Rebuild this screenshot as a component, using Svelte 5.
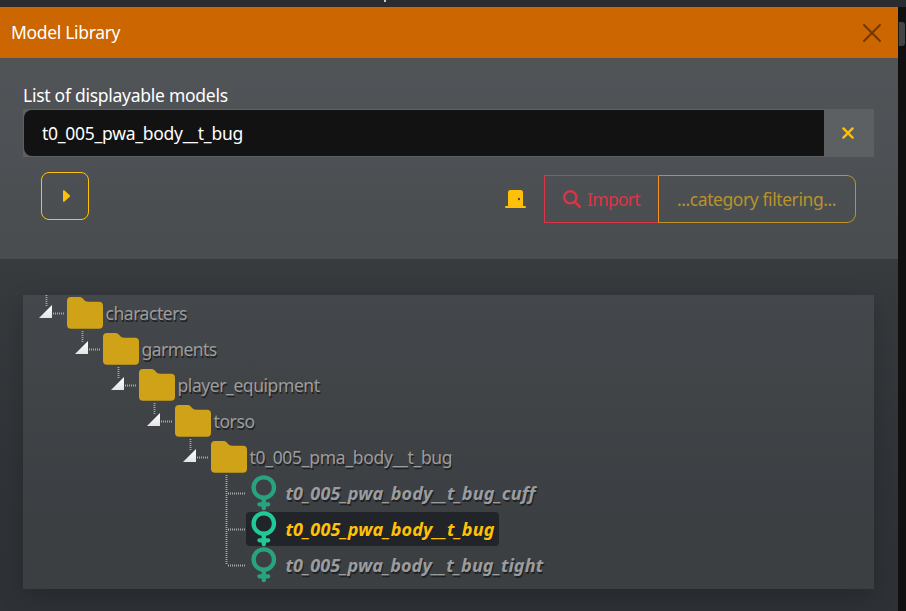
<script>
  const rows = [
    { depth: 0, label: 'characters', spacing: -0.45 },
    { depth: 1, label: 'garments', spacing: -0.55 },
    { depth: 2, label: 'player_equipment', spacing: -0.43 },
    { depth: 3, label: 'torso', spacing: -0.4 },
    { depth: 4, label: 't0_005_pma_body__t_bug', spacing: -0.31 },
    { depth: 5, label: 't0_005_pwa_body__t_bug_cuff', spacing: 0.12, leaf: true },
    { depth: 5, label: 't0_005_pwa_body__t_bug', spacing: 0.12, leaf: true, selected: true },
    { depth: 5, label: 't0_005_pwa_body__t_bug_tight', spacing: 0.08, leaf: true, last: true }
  ];
</script>

<div class="page">
  <div class="topbar"><span></span></div>
  <div class="row-main">
    <main class="modal">
      <header>
        <h1>Model Library</h1>
        <button class="close" aria-label="Close">
          <svg width="20" height="20" viewBox="0 0 20 20"><path d="M2 2 18 18M18 2 2 18" stroke="#703800" stroke-width="1.9" stroke-linecap="round" /></svg>
        </button>
      </header>
      <section class="controls">
        <label class="title" for="model">List of displayable models</label>
        <div class="field">
          <input id="model" value="t0_005_pwa_body__t_bug" />
          <button class="clear" aria-label="Clear">
            <svg width="12" height="12" viewBox="0 0 12 12"><path d="M1.4 1.4 10.6 10.6M10.6 1.4 1.4 10.6" stroke="#ffc107" stroke-width="2.3" stroke-linecap="round" /></svg>
          </button>
        </div>
        <div class="actions">
          <button class="play" aria-label="Play">
            <svg width="8" height="12" viewBox="0 0 8 12"><path d="M0 1.1C0 .2.8-.1 1.5.5L6.7 5.3q.7.7 0 1.4L1.5 11.5C.8 12.1 0 11.8 0 10.9Z" fill="#ffc107" /></svg>
          </button>
          <div class="right">
            <svg class="door" width="21" height="18" viewBox="0 0 21 18"><path fill-rule="evenodd" d="M3 16V2.5Q3 0 5.5 0H15.5Q18 0 18 2.5V16H20Q21 16 21 17T20 18H1Q0 18 0 17T1 16ZM14 7.8A1.2 1.2 0 0 0 14 10.2 1.2 1.2 0 0 0 14 7.8Z" fill="#ffc107" /></svg>
            <button class="import">
              <svg width="18" height="18" viewBox="0 0 18 18"><circle cx="7.3" cy="7.3" r="6.1" fill="none" stroke="#dc3545" stroke-width="2.4" /><path d="M11.9 11.9 16.8 16.8" stroke="#dc3545" stroke-width="2.5" stroke-linecap="round" /></svg>
              <span>Import</span>
            </button>
            <button class="filter"><span>...category filtering...</span></button>
          </div>
        </div>
      </section>
      <section class="results">
        <div class="tree">
          {#each rows as row}
            <div class="node" class:leaf={row.leaf} class:selected={row.selected} style="padding-left: {8 + row.depth * 36}px">
              <span class="branch">
                <svg width="36" height="36" viewBox="0 0 36 36">
                  <path class="dots" d={row.leaf && !row.last ? 'M15.5 0V36' : row.last ? 'M15.5 0V18' : 'M15.5 0V12'} />
                  <path class="dots" d={row.leaf ? 'M17 18.5H34' : 'M22 18.5H34'} />
                  {#if !row.leaf}
                    <defs><linearGradient id="arrow{row.depth}" x2="0" y2="1"><stop stop-color="#fff" /><stop offset="1" stop-color="#e4e4e4" /></linearGradient></defs>
                    <path d="M8 23 21 10V23Z" fill="url(#arrow{row.depth})" />
                  {/if}
                </svg>
              </span>
              <span class="item">
                {#if row.leaf}
                  <svg class="icon" width="36" height="36" viewBox="0 0 36 36" fill="none" stroke={row.selected ? '#20c997' : '#29a37f'} stroke-width="4.3" stroke-linecap="round"><circle cx="16.8" cy="12.5" r="10.2" /><path d="M16.8 23V33.2M12.4 29.3H21.2" /></svg>
                {:else}
                  <svg class="icon" width="36" height="36" viewBox="0 0 36 36"><path d="M0 6Q0 2 4 2H12.5C15 2 15.8 3.4 17 4.9Q18.5 6.7 21 6.7H32Q36 6.7 36 10.7V29.7Q36 33.7 32 33.7H4Q0 33.7 0 29.7Z" fill="#cfa218" /></svg>
                {/if}
                <span class="label" style="letter-spacing: {row.spacing}px">{row.label}</span>
              </span>
            </div>
          {/each}
        </div>
      </section>
    </main>
    <aside><div class="thumb"></div></aside>
  </div>
</div>

<style>
  :global(body) { background: #2b2c30; overflow: hidden; }
  * { box-sizing: border-box; }
  .page { width: 906px; height: 611px; display: flex; flex-direction: column; font: 17.5px/27px "Noto Sans", "Open Sans", sans-serif; color: #fff; }
  .topbar { height: 7px; background: #2b2c30; padding-left: 384px; display: flex; }
  .topbar span { width: 2px; height: 2px; background: #c9c9c9; }
  .row-main { flex: 1; display: flex; min-height: 0; }
  .modal { width: 898px; display: flex; flex-direction: column; }
  aside { width: 8px; background: #101010; padding-top: 15px; }
  .thumb { height: 24px; width: 7px; background: #444; border-radius: 0 3px 3px 0; border-left: 1px solid #181818; }
  button { font: inherit; background: none; border: 0; padding: 0; margin: 0; display: flex; align-items: center; justify-content: center; }
  header { height: 51px; background: #cb6600; display: flex; align-items: center; justify-content: space-between; padding: 0 16px 0 11px; }
  h1 { margin: 0; font-size: 17.5px; font-weight: 400; letter-spacing: -0.33px; }
  .controls { height: 201px; background: linear-gradient(#505457, #4d5054 50%, #494d4f); padding: 24px 24px 0 23px; display: flex; flex-direction: column; }
  .title { height: 27px; letter-spacing: -0.27px; white-space: nowrap; }
  .field { height: 48px; background: #5c6063; display: flex; padding: 1px 0 1px 1px; }
  input { width: 800px; height: 46px; border: 0; outline: 0; padding: 0 18px 1px; background: #121212; border-radius: 8px 0 0 8px; font: inherit; color: #fff; letter-spacing: -0.26px; }
  .clear { flex: 1; padding-right: 2px; }
  .actions { display: flex; justify-content: space-between; padding: 15px 18px 0; }
  .play { width: 48px; height: 48px; border: 1px solid #ffc107; border-radius: 8px; padding-left: 3px; }
  .right { display: flex; align-items: center; padding-top: 3px; height: 51px; }
  .door { margin-right: 18px; }
  .import { width: 114px; height: 48px; border: 1px solid #dc3545; border-right: 0; color: #dc3545; gap: 6px; letter-spacing: -0.7px; }
  .filter { width: 198px; height: 48px; border: 1px solid #bd9425; border-left-color: #f7901e; border-radius: 0 9px 9px 0; color: #b8932a; letter-spacing: -0.42px; white-space: nowrap; padding-right: 1px; }
  .import span, .filter span { padding-top: 1px; }
  .results { flex: 1; background: linear-gradient(#383b3e, #303337 60%, #2e3136); padding: 36px 24px 22px 23px; }
  .tree { height: 294px; background: linear-gradient(#44474b, #404346 40%, #3c3f43 70%, #3b3f41); overflow: hidden; color: #9b9c9d; box-shadow: 0 8px 24px rgba(0, 0, 0, .2); }
  .node { height: 36px; display: flex; }
  .branch, .branch svg, .icon { width: 36px; height: 36px; display: block; flex: none; }
  .dots { fill: none; stroke: #aaa; stroke-width: 1.8; stroke-dasharray: 1 1; }
  .item { display: flex; align-items: center; gap: 2.5px; height: 36px; }
  .label { white-space: nowrap; padding-top: 1px; text-shadow: 1px 2px 0 #202224; }
  .leaf .label { font-size: 18px; font-weight: 700; font-style: italic; }
  .selected .item { height: 34px; margin: 1px 0 0 -1px; padding: 0 4px 0 1px; border-radius: 4px; background: #212428; color: #ffc107; }
  .selected .icon { overflow: visible; }
</style>
